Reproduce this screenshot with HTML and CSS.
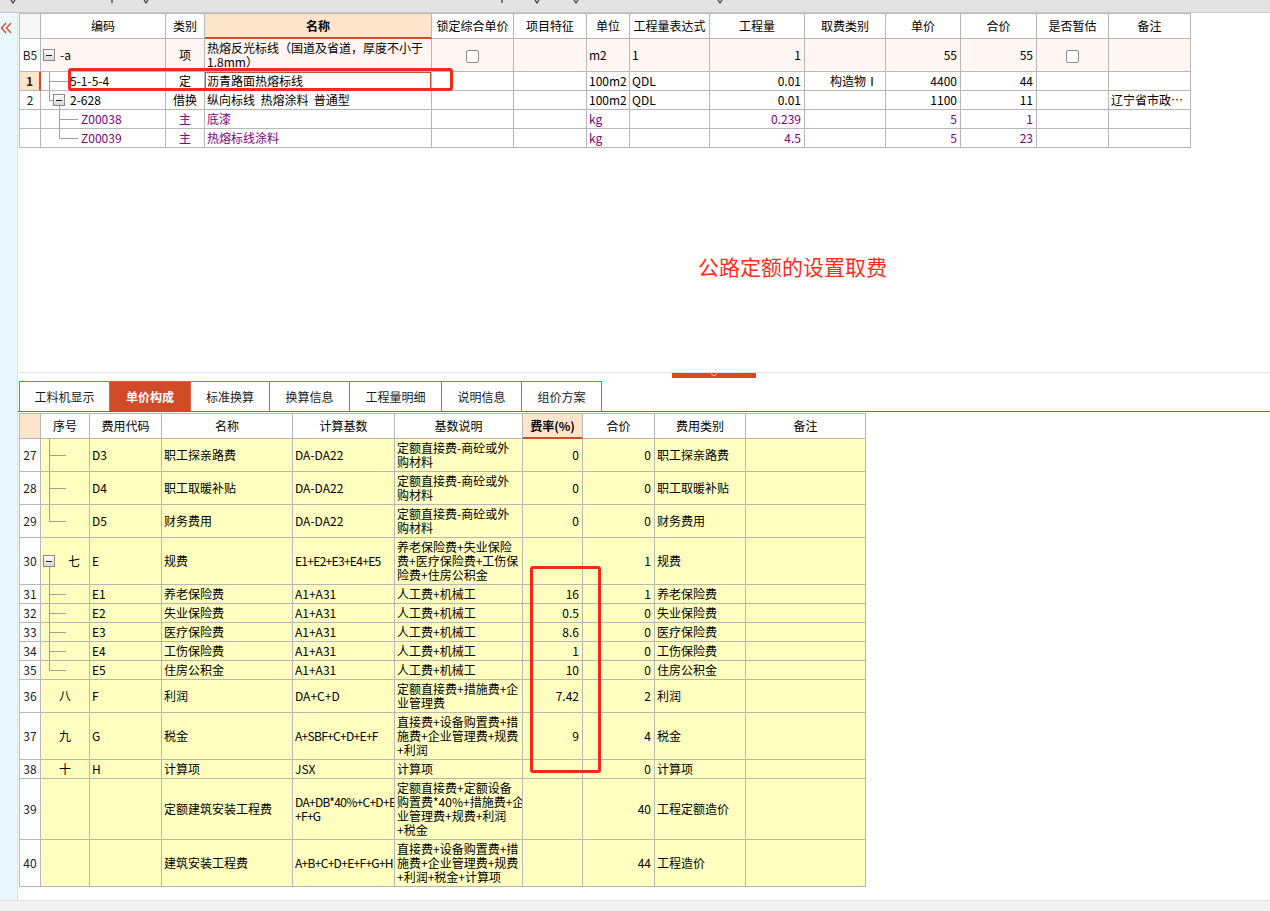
FILE: index.html
```html
<!DOCTYPE html>
<html lang="zh-CN">
<head>
<meta charset="utf-8">
<title>单价构成</title>
<link rel="stylesheet" href="styles.css">
</head>
<body>
<div class="topstrip">
  <svg class="marks" width="1270" height="12" viewBox="0 0 1270 12">
    <path d="M11 0 L13 3 L15 0" stroke="#333" fill="none" stroke-width="1.2"/>
    <path d="M112 0 L112 3" stroke="#333" stroke-width="1.2"/>
    <path d="M144 0 L146 3 L148 0" stroke="#333" fill="none" stroke-width="1.2"/>
    <path d="M502 0 L502 3" stroke="#333" stroke-width="1.2"/>
    <path d="M535 0 L537 3 L539 0" stroke="#333" fill="none" stroke-width="1.2"/>
    <path d="M574 0 L576 3 L578 0" stroke="#333" fill="none" stroke-width="1.2"/>
    <path d="M718 0 L720 3 L722 0" stroke="#333" fill="none" stroke-width="1.2"/>
  </svg>
</div>
<div class="main">
  <aside class="side">
    <svg width="12" height="12" viewBox="0 0 12 12"><path d="M6 1 L1.5 6 L6 11 M11 1 L6.5 6 L11 11" stroke="#e2472b" fill="none" stroke-width="1.4"/></svg>
  </aside>
  <div class="content">
    <div class="upper">
      <table class="grid top">
        <colgroup>
          <col style="width:21px"><col style="width:125px"><col style="width:39px"><col style="width:227px"><col style="width:82px"><col style="width:73px"><col style="width:43px"><col style="width:80px"><col style="width:95px"><col style="width:81px"><col style="width:75px"><col style="width:76px"><col style="width:72px"><col style="width:82px">
        </colgroup>
        <tr class="hd">
          <td class="corner"></td><td>编码</td><td>类别</td><td class="hl">名称</td><td>锁定综合单价</td><td>项目特征</td><td>单位</td><td>工程量表达式</td><td>工程量</td><td>取费类别</td><td>单价</td><td>合价</td><td>是否暂估</td><td>备注</td>
        </tr>
        <tr class="h33 pink">
          <td class="rn">B5</td>
          <td class="tr c-b5"><div class="tree"><i class="box b2"></i><span class="tx5">-a</span></div></td>
          <td class="ctr">项</td>
          <td>热熔反光标线（国道及省道，厚度不小于<br>1.8mm）</td>
          <td class="ctr"><span class="cb"></span></td>
          <td></td>
          <td>m2</td>
          <td>1</td>
          <td class="num">1</td>
          <td></td>
          <td class="num">55</td>
          <td class="num">55</td>
          <td class="ctr"><span class="cb"></span></td>
          <td></td>
        </tr>
        <tr class="h19">
          <td class="rn sel">1</td>
          <td class="tr c-r1">5-1-5-4</td>
          <td class="ctr">定</td>
          <td class="cur">沥青路面热熔标线</td>
          <td></td><td></td>
          <td>100m2</td>
          <td>QDL</td>
          <td class="num">0.01</td>
          <td class="fee">构造物Ⅰ</td>
          <td class="num">4400</td>
          <td class="num">44</td>
          <td></td><td></td>
        </tr>
        <tr class="h19">
          <td class="rn">2</td>
          <td class="tr c-r2"><div class="tree"><i class="box b12"></i><span class="tx5">2-628</span></div></td>
          <td class="ctr">借换</td>
          <td class="pre">纵向标线  热熔涂料  普通型</td>
          <td></td><td></td>
          <td>100m2</td>
          <td>QDL</td>
          <td class="num">0.01</td>
          <td></td>
          <td class="num">1100</td>
          <td class="num">11</td>
          <td></td>
          <td>辽宁省市政…</td>
        </tr>
        <tr class="h19 purple">
          <td class="rn"></td>
          <td class="tr c-z">Z00038</td>
          <td class="ctr">主</td>
          <td>底漆</td>
          <td></td><td></td>
          <td>kg</td>
          <td></td>
          <td class="num">0.239</td>
          <td></td>
          <td class="num">5</td>
          <td class="num">1</td>
          <td></td><td></td>
        </tr>
        <tr class="h19 purple">
          <td class="rn"></td>
          <td class="tr c-zend">Z00039</td>
          <td class="ctr">主</td>
          <td>热熔标线涂料</td>
          <td></td><td></td>
          <td>kg</td>
          <td></td>
          <td class="num">4.5</td>
          <td></td>
          <td class="num">5</td>
          <td class="num">23</td>
          <td></td><td></td>
        </tr>
      </table>
      <div class="note">公路定额的设置取费</div>
    </div>

    <div class="splitter">
      <div class="handle"><svg width="8" height="4" viewBox="0 0 8 4"><path d="M1 0.5 L4 3 L7 0.5" stroke="#f3c9bd" fill="none" stroke-width="1"/></svg></div>
    </div>

    <div class="tabs">
      <div class="tab w91">工料机显示</div>
      <div class="tab w81 active">单价构成</div>
      <div class="tab w79">标准换算</div>
      <div class="tab w80">换算信息</div>
      <div class="tab w92">工程量明细</div>
      <div class="tab w80">说明信息</div>
      <div class="tab w80">组价方案</div>
    </div>

    <table class="grid bottom">
      <colgroup>
        <col style="width:21px"><col style="width:49px"><col style="width:72px"><col style="width:131px"><col style="width:102px"><col style="width:128px"><col style="width:60px"><col style="width:72px"><col style="width:91px"><col style="width:120px">
      </colgroup>
      <tr class="hd">
        <td class="corner peach"></td><td>序号</td><td>费用代码</td><td>名称</td><td>计算基数</td><td>基数说明</td><td class="hl">费率(%)</td><td>合价</td><td>费用类别</td><td>备注</td>
      </tr>
      <tr class="h33 y">
        <td class="rn">27</td><td class="t-mid"></td><td>D3</td><td>职工探亲路费</td><td>DA-DA22</td><td>定额直接费-商砼或外<br>购材料</td><td class="num">0</td><td class="num">0</td><td>职工探亲路费</td><td></td>
      </tr>
      <tr class="h33 y">
        <td class="rn">28</td><td class="t-mid"></td><td>D4</td><td>职工取暖补贴</td><td>DA-DA22</td><td>定额直接费-商砼或外<br>购材料</td><td class="num">0</td><td class="num">0</td><td>职工取暖补贴</td><td></td>
      </tr>
      <tr class="h33 y">
        <td class="rn">29</td><td class="t-end"></td><td>D5</td><td>财务费用</td><td>DA-DA22</td><td>定额直接费-商砼或外<br>购材料</td><td class="num">0</td><td class="num">0</td><td>财务费用</td><td></td>
      </tr>
      <tr class="h47 y">
        <td class="rn">30</td><td class="t-box"><div class="tree"><i class="box b2"></i><span class="tx13">七</span></div></td><td>E</td><td>规费</td><td class="fx">E1+E2+E3+E4+E5</td><td>养老保险费+失业保险<br>费+医疗保险费+工伤保<br>险费+住房公积金</td><td class="num"></td><td class="num">1</td><td>规费</td><td></td>
      </tr>
      <tr class="h19 y">
        <td class="rn">31</td><td class="t-mid"></td><td>E1</td><td>养老保险费</td><td>A1+A31</td><td>人工费+机械工</td><td class="num">16</td><td class="num">1</td><td>养老保险费</td><td></td>
      </tr>
      <tr class="h19 y">
        <td class="rn">32</td><td class="t-mid"></td><td>E2</td><td>失业保险费</td><td>A1+A31</td><td>人工费+机械工</td><td class="num">0.5</td><td class="num">0</td><td>失业保险费</td><td></td>
      </tr>
      <tr class="h19 y">
        <td class="rn">33</td><td class="t-mid"></td><td>E3</td><td>医疗保险费</td><td>A1+A31</td><td>人工费+机械工</td><td class="num">8.6</td><td class="num">0</td><td>医疗保险费</td><td></td>
      </tr>
      <tr class="h19 y">
        <td class="rn">34</td><td class="t-mid"></td><td>E4</td><td>工伤保险费</td><td>A1+A31</td><td>人工费+机械工</td><td class="num">1</td><td class="num">0</td><td>工伤保险费</td><td></td>
      </tr>
      <tr class="h19 y">
        <td class="rn">35</td><td class="t-end"></td><td>E5</td><td>住房公积金</td><td>A1+A31</td><td>人工费+机械工</td><td class="num">10</td><td class="num">0</td><td>住房公积金</td><td></td>
      </tr>
      <tr class="h33 y">
        <td class="rn">36</td><td class="ctr">八</td><td>F</td><td>利润</td><td>DA+C+D</td><td>定额直接费+措施费+企<br>业管理费</td><td class="num">7.42</td><td class="num">2</td><td>利润</td><td></td>
      </tr>
      <tr class="h47 y">
        <td class="rn">37</td><td class="ctr">九</td><td>G</td><td>税金</td><td class="fx">A+SBF+C+D+E+F</td><td>直接费+设备购置费+措<br>施费+企业管理费+规费<br>+利润</td><td class="num">9</td><td class="num">4</td><td>税金</td><td></td>
      </tr>
      <tr class="h19 y">
        <td class="rn">38</td><td class="ctr">十</td><td>H</td><td>计算项</td><td>JSX</td><td>计算项</td><td class="num"></td><td class="num">0</td><td>计算项</td><td></td>
      </tr>
      <tr class="h61 y">
        <td class="rn">39</td><td></td><td></td><td>定额建筑安装工程费</td><td class="fx">DA+DB*40%+C+D+E<br>+F+G</td><td>定额直接费+定额设备<br>购置费*40%+措施费+企<br>业管理费+规费+利润<br>+税金</td><td class="num"></td><td class="num">40</td><td>工程定额造价</td><td></td>
      </tr>
      <tr class="h47 y">
        <td class="rn">40</td><td></td><td></td><td>建筑安装工程费</td><td class="fx">A+B+C+D+E+F+G+H</td><td>直接费+设备购置费+措<br>施费+企业管理费+规费<br>+利润+税金+计算项</td><td class="num"></td><td class="num">44</td><td>工程造价</td><td></td>
      </tr>
    </table>
  </div>
</div>
<div class="statusbar"></div>

<div class="mark mark-top"></div>
<div class="mark mark-rate"></div>
</body>
</html>
```

FILE: styles.css
```css
* { box-sizing: border-box; }

html, body {
  margin: 0;
  padding: 0;
}

body {
  width: 1270px;
  height: 911px;
  overflow: hidden;
  position: relative;
  background: #ffffff;
  font-family: "Noto Sans CJK SC", "Liberation Sans", sans-serif;
  font-size: 12px;
  color: #000;
}

.topstrip {
  height: 13px;
  background: #e3e3e3;
  border-bottom: 1px solid #c9c9c9;
}
.marks { display: block; }

.main {
  display: flex;
  height: 887px;
}

.side {
  width: 18px;
  flex: 0 0 18px;
  background: #eaf7fc;
  border-right: 1px solid #d6e6ec;
  padding-top: 9px;
  padding-left: 0;
}
.side svg { display: block; }

.content {
  flex: 1;
  display: flex;
  flex-direction: column;
  min-width: 0;
}

.upper {
  height: 359px;
  padding-left: 1px;
}

/* ---------- grids ---------- */
.grid {
  border-collapse: separate;
  border-spacing: 0;
  table-layout: fixed;
  border-top: 1px solid #b7b7b7;
  border-left: 1px solid #b7b7b7;
}
.grid.top { width: 1172px; }
.grid.bottom { width: 847px; margin-left: 1px; }

.grid td {
  border-right: 1px solid #b7b7b7;
  border-bottom: 1px solid #b7b7b7;
  padding: 0 2px;
  line-height: 14px;
  white-space: nowrap;
  overflow: hidden;
  vertical-align: middle;
  text-align: left;
}

.grid td.fx { letter-spacing: -0.7px; }

.grid tr.hd { height: 25px; }
.grid tr.hd td {
  text-align: center;
  background: #ffffff;
}
.grid tr.hd td.corner { background: #f7f7f7; }
.grid tr.hd td.corner.peach { background: #fde5cb; }
.grid tr.hd td.hl {
  background: #fde5cb;
  font-weight: bold;
  border-bottom: 2px solid #d14b28;
}

.h19 { height: 19px; }
.h33 { height: 33px; }
.h47 { height: 47px; }
.h61 { height: 61px; }

.grid td.rn {
  text-align: center;
  background: #ffffff;
  color: #222;
  padding: 0;
}
.grid td.rn.sel {
  background: #fde5cb;
  font-weight: bold;
  border-right: 2px solid #d14b28;
}

.grid td.ctr { text-align: center; }
.grid td.num { text-align: right; padding-right: 3px; }
.grid td.pre { white-space: pre; }
.grid td.fee { text-align: right; padding-right: 7px; }
.grid td.cur { box-shadow: inset 0 0 0 1px #c95532; }

.pink td { background: #fff5f3; }
.pink td.rn { background: #ffffff; }
.purple td { color: #800080; }
.y td { background-color: #ffffc0; }

.cb {
  display: inline-block;
  width: 13px;
  height: 13px;
  border: 1px solid #8e8e8e;
  border-radius: 2px;
  background: #fff;
  vertical-align: middle;
}

/* ---------- tree ---------- */
.grid td.tr { padding: 0; }
.tree {
  display: flex;
  align-items: center;
}
.box {
  display: block;
  width: 12px;
  height: 12px;
  flex: 0 0 12px;
  border: 1px solid #8a8a8a;
  background:
    linear-gradient(#222, #222) center / 6px 1px no-repeat,
    linear-gradient(#ffffff, #d6d6d6);
}
.b2 { margin-left: 2px; }
.b12 { margin-left: 12px; }
.tx5 { margin-left: 5px; }
.tx13 { margin-left: 13px; }

/* top grid tree lines */
.c-b5 {
  background-image: linear-gradient(#a0a0a0, #a0a0a0);
  background-position: 8px 100%;
  background-size: 1px calc(50% - 6px);
  background-repeat: no-repeat;
}
.grid td.c-r1 {
  padding-left: 29px;
  background-image: linear-gradient(#a0a0a0, #a0a0a0), linear-gradient(#a0a0a0, #a0a0a0);
  background-position: 8px 0, 8px 50%;
  background-size: 1px 100%, 19px 1px;
  background-repeat: no-repeat;
}
.c-r2 {
  background-image: linear-gradient(#a0a0a0, #a0a0a0), linear-gradient(#a0a0a0, #a0a0a0), linear-gradient(#a0a0a0, #a0a0a0);
  background-position: 8px 0, 8px 50%, 18px 100%;
  background-size: 1px 50%, 4px 1px, 1px calc(50% - 6px);
  background-repeat: no-repeat;
}
.grid td.c-z {
  padding-left: 40px;
  background-image: linear-gradient(#a0a0a0, #a0a0a0), linear-gradient(#a0a0a0, #a0a0a0);
  background-position: 18px 0, 18px 50%;
  background-size: 1px 100%, 19px 1px;
  background-repeat: no-repeat;
}
.grid td.c-zend {
  padding-left: 40px;
  background-image: linear-gradient(#a0a0a0, #a0a0a0), linear-gradient(#a0a0a0, #a0a0a0);
  background-position: 18px 0, 18px 50%;
  background-size: 1px 50%, 19px 1px;
  background-repeat: no-repeat;
}

/* bottom grid tree lines */
.grid td.t-mid {
  background-image: linear-gradient(#a0a0a0, #a0a0a0), linear-gradient(#a0a0a0, #a0a0a0);
  background-position: 8px 0, 8px 50%;
  background-size: 1px 100%, 17px 1px;
  background-repeat: no-repeat;
}
.grid td.t-end {
  background-image: linear-gradient(#a0a0a0, #a0a0a0), linear-gradient(#a0a0a0, #a0a0a0);
  background-position: 8px 0, 8px 50%;
  background-size: 1px 50%, 17px 1px;
  background-repeat: no-repeat;
}
.grid td.t-box {
  padding: 0;
  background-image: linear-gradient(#a0a0a0, #a0a0a0);
  background-position: 8px 100%;
  background-size: 1px calc(50% - 6px);
  background-repeat: no-repeat;
}

/* ---------- annotation text ---------- */
.note {
  margin-top: 108px;
  margin-left: 679px;
  font-size: 21px;
  line-height: 21px;
  color: #ff2c1c;
  white-space: nowrap;
}

/* ---------- splitter + tabs ---------- */
.splitter {
  height: 9px;
  border-top: 1px solid #e2e2e2;
}
.handle {
  width: 84px;
  height: 5px;
  margin-left: 654px;
  background: #d14b28;
  display: flex;
  justify-content: center;
  align-items: flex-start;
}
.handle svg { display: block; }

.tabs {
  display: flex;
  height: 31px;
  padding-left: 1px;
  border-bottom: 1px solid #d14b28;
  margin-bottom: 1px;
}
.tab {
  height: 30px;
  border-top: 1px solid #d9613f;
  border-right: 1px solid #d9613f;
  display: flex;
  align-items: center;
  justify-content: center;
  color: #1a1a1a;
  font-size: 12px;
}
.tab:first-child { border-left: 1px solid #d9613f; }
.tab.active {
  background: #d14b28;
  color: #ffffff;
  font-weight: bold;
}
.w79 { width: 79px; }
.w80 { width: 80px; }
.w81 { width: 81px; }
.w91 { width: 91px; }
.w92 { width: 92px; }

/* ---------- status bar ---------- */
.statusbar {
  height: 11px;
  background: #f2f2f2;
  border-top: 1px solid #dcdcdc;
}

/* ---------- red markup overlays ---------- */
.mark {
  position: absolute;
  border: 3px solid #f5281c;
  border-radius: 3px;
}
.mark-top { left: 68px; top: 68px; width: 385px; height: 23px; }
.mark-rate { left: 530px; top: 566px; width: 71px; height: 207px; }
```
